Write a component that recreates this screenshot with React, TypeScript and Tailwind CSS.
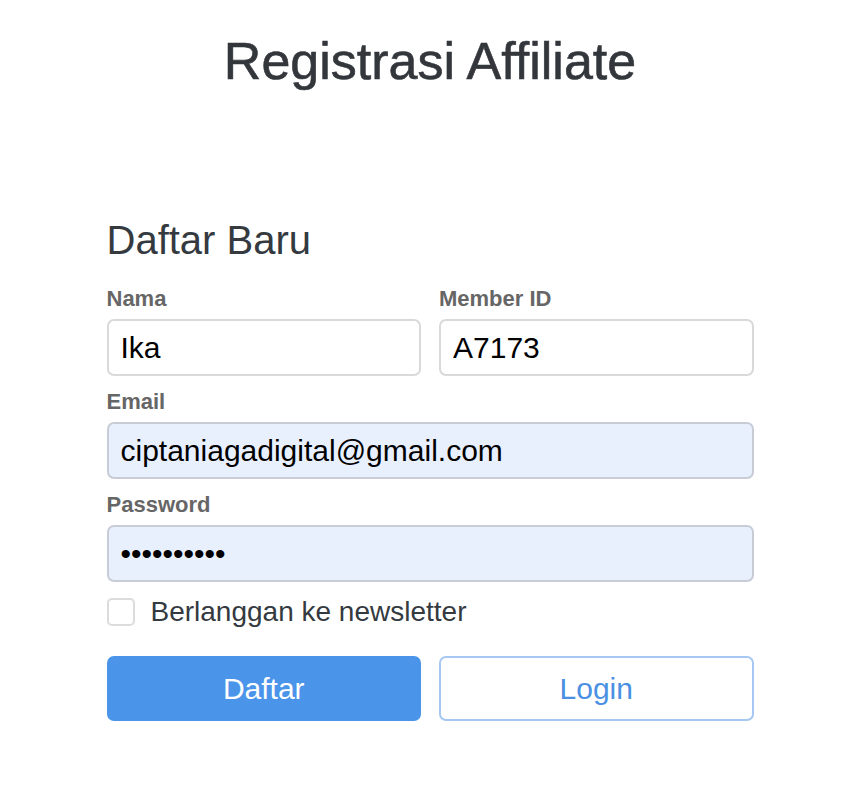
import React from 'react';

const FONT = { fontFamily: '"Liberation Sans", Arial, Helvetica, sans-serif' };

type FieldProps = {
  label: string;
  value: string;
  type?: string;
  filled?: boolean;
};

function Field({ label, value, type = 'text', filled = false }: FieldProps) {
  return (
    <label className="flex flex-col">
      <span className="mb-[7px] text-[22px] font-bold leading-[26px] text-[#666666]">{label}</span>
      <input
        type={type}
        value={value}
        readOnly
        className={`h-[57px] w-full rounded-[7px] border-2 px-[12px] text-[30px] leading-none text-black outline-none ${
          filled ? 'border-[#c7ccd6] bg-[#e8f0fe]' : 'border-[#d9d9d9] bg-white'
        }`}
        style={FONT}
      />
    </label>
  );
}

export default function App() {
  return (
    <div className="min-h-[786px] w-full bg-white pr-[8px]" style={FONT}>
      <div className="mx-auto flex w-[647px] flex-col">
        <h1 className="mt-[30px] text-center text-[52px] font-normal leading-[62px] text-[#33373c] [-webkit-text-stroke:0.6px_#33373c]">
          Registrasi Affiliate
        </h1>

        <h2 className="mt-[124px] text-[40px] font-normal leading-[48px] text-[#343a40]">Daftar Baru</h2>

        <div className="mt-[22px] flex flex-col gap-[13px]">
          <div className="grid grid-cols-2 gap-[18px]">
            <Field label="Nama" value="Ika" />
            <Field label="Member ID" value="A7173" />
          </div>
          <Field label="Email" value="ciptaniagadigital@gmail.com" filled />
          <Field label="Password" value="1234567890" type="password" filled />
        </div>

        <label className="mt-[14px] flex items-center gap-[16px]">
          <span className="h-[28px] w-[28px] rounded-[5px] border-2 border-[#dcdcdc] bg-white" />
          <span className="text-[28px] leading-[32px] text-[#343a40]">Berlanggan ke newsletter</span>
        </label>

        <div className="mt-[28px] grid grid-cols-2 gap-[18px]">
          <button
            type="button"
            className="h-[65px] rounded-[7px] bg-[#4a94ea] text-[30px] text-white"
          >
            Daftar
          </button>
          <button
            type="button"
            className="h-[65px] rounded-[7px] border-2 border-[#a6c8f2] bg-white text-[30px] text-[#4a90e2]"
          >
            Login
          </button>
        </div>
      </div>
    </div>
  );
}
